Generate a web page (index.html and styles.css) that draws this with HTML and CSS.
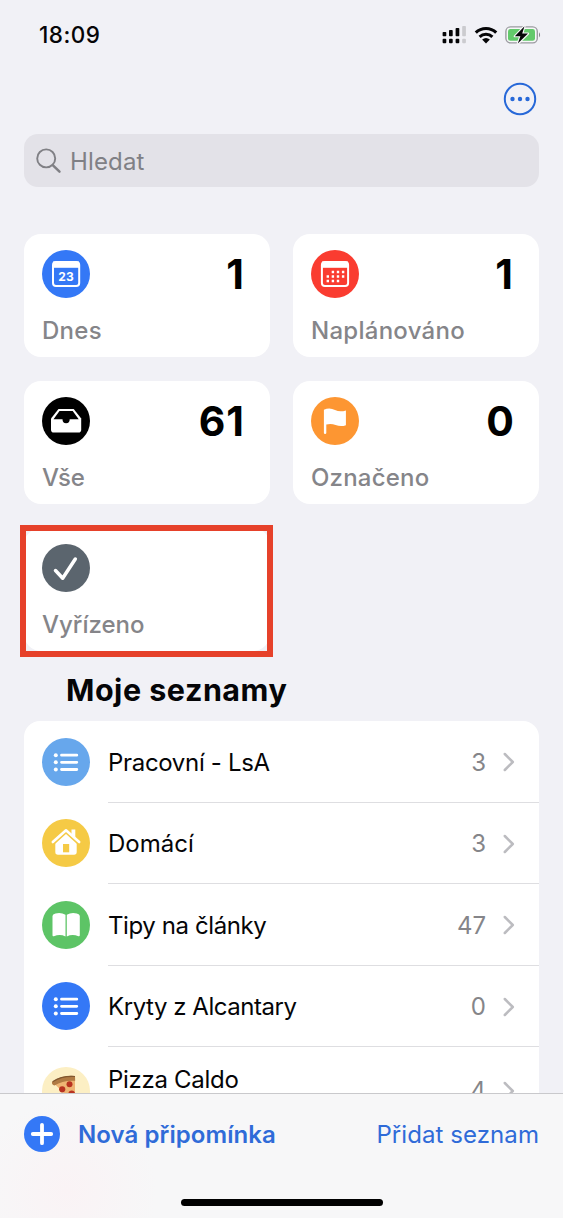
FILE: index.html
```html
<!DOCTYPE html>
<html lang="cs">
<head>
<meta charset="utf-8">
<title>Připomínky</title>
<link rel="stylesheet" href="styles.css">
</head>
<body>
<div class="phone">
  <header class="status">
    <span class="time">18:09</span>
    <div class="status-icons">
      <svg class="signal" width="25" height="18" viewBox="0 0 25 18">
        <g fill="#050507"><rect x="0.6" y="6" width="3.7" height="4.2" rx="0.8"/><rect x="7" y="4" width="3.7" height="6.2" rx="0.8"/><rect x="13.6" y="2" width="3.7" height="8.2" rx="0.8"/><rect x="0.6" y="12.7" width="3.7" height="4.6" rx="1"/><rect x="7" y="12.7" width="3.7" height="4.6" rx="1"/><rect x="13.6" y="12.7" width="3.7" height="4.6" rx="1"/></g>
        <g fill="#cbcbcf"><rect x="20.2" y="0" width="3.7" height="10.2" rx="0.8"/><rect x="20.2" y="12.7" width="3.7" height="4.6" rx="1"/></g>
      </svg>
      <svg class="wifi" width="24" height="18" viewBox="0 0 24 18">
        <path d="M1.8 6.7A14.6 14.6 0 0 1 22.2 6.7" fill="none" stroke="#050507" stroke-width="3.1"/>
        <path d="M5.6 10.9A9.3 9.3 0 0 1 18.4 10.9" fill="none" stroke="#050507" stroke-width="3"/>
        <path d="M8.1 13.6Q12 10.4 15.9 13.6L12 17.5Z" fill="#050507"/>
      </svg>
      <svg class="battery" width="37" height="20" viewBox="0 0 37 20">
        <rect x="0.9" y="1.9" width="31.4" height="16" rx="4.6" fill="#f7f7f8" stroke="#9b9ba0" stroke-width="1.4"/>
        <rect x="3" y="4" width="27" height="11.8" rx="2.4" fill="#63c96b"/>
        <path d="M34 7.2q2.2 2.700 0 5.400z" fill="#88888d"/>
        <path d="M19.500 1.200L9.800 11.200h5.600l-2.600 7.400L23 8.600h-5.800z" fill="#050507" stroke="#f7f7f8" stroke-width="2.200" paint-order="stroke" stroke-linejoin="round"/>
      </svg>
    </div>
  </header>

  <nav class="nav">
    <svg width="34" height="34" viewBox="0 0 34 34">
      <circle cx="17" cy="17" r="15.200" fill="none" stroke="#2768d8" stroke-width="2"/>
      <g fill="#2768d8"><circle cx="9.500" cy="17" r="2.200"/><circle cx="17" cy="17" r="2.200"/><circle cx="24.500" cy="17" r="2.200"/></g>
    </svg>
  </nav>

  <div class="search">
    <svg width="26" height="26" viewBox="0 0 26 26" fill="none" stroke="#808085" stroke-linecap="round"><circle cx="10.200" cy="10.400" r="9" stroke-width="1.900"/><path d="M17 17.300l6.500 6.400" stroke-width="2.500"/></svg>
    <span class="search-text">Hledat</span>
  </div>

  <main>
    <section class="cards">
      <article class="card">
        <div class="card-top">
          <svg class="disc" viewBox="0 0 48 48"><circle cx="24" cy="24" r="24" fill="#3478f6"/><rect x="11" y="12" width="26.200" height="24" rx="3" fill="none" stroke="#fff" stroke-width="2"/><path d="M11 11.500h26v6.300H11z" fill="#fff"/><text class="day" x="24" y="30.900" text-anchor="middle">23</text></svg>
          <span class="count">1</span>
        </div>
        <div class="label l-dnes">Dnes</div>
      </article>
      <article class="card">
        <div class="card-top">
          <svg class="disc" viewBox="0 0 48 48"><circle cx="24" cy="24" r="24" fill="#fa3c30"/><rect x="10.900" y="12" width="26.200" height="24" rx="3" fill="none" stroke="#fff" stroke-width="2"/><path d="M11 11.500h26v6.300H11z" fill="#fff"/><g stroke="#fff" stroke-width="2.400" stroke-dasharray="2.400 2.700"><path d="M20.700 22h12.600M15.600 26.500h17.700M15.600 31h12.600"/></g></svg>
          <span class="count">1</span>
        </div>
        <div class="label l-plan">Naplánováno</div>
      </article>
      <article class="card">
        <div class="card-top">
          <svg class="disc" viewBox="0 0 48 48"><circle cx="24" cy="24" r="24" fill="#000"/><path d="M16.500 12h15.200l7.500 9.500v11.200q0 2.800-2.800 2.800H11.800q-2.800 0-2.800-2.800V21.500z" fill="#fff"/><path d="M17.500 14h13.200l6 8.300h-9q0 3.900-3.600 3.900t-3.600-3.900h-9z" fill="#000"/></svg>
          <span class="count c-all">61</span>
        </div>
        <div class="label l-vse">Vše</div>
      </article>
      <article class="card">
        <div class="card-top">
          <svg class="disc" viewBox="0 0 48 48"><circle cx="24" cy="24" r="24" fill="#fd9632"/><path d="M12.900 12.800Q18.500 10 24 13q5 2.500 10.900.4V28.200q-5 1.800-10.300-.2-4.600-1.900-9.300-.5V36q0 1-1.200 1t-1.200-1z" fill="#fff"/></svg>
          <span class="count c-zero">0</span>
        </div>
        <div class="label l-ozn">Označeno</div>
      </article>
      <article class="card card-marked">
        <div class="card-top">
          <svg class="disc" viewBox="0 0 48 48"><circle cx="24" cy="24" r="24" fill="#5b656e"/><path d="M13.500 26.500l7.200 7.700L33.300 15" fill="none" stroke="#fff" stroke-width="3.500" stroke-linecap="round" stroke-linejoin="round"/></svg>
        </div>
        <div class="label l-vyr">Vyřízeno</div>
      </article>
    </section>

    <h2 class="heading">Moje seznamy</h2>

    <section class="list">
      <div class="row">
        <svg class="disc" viewBox="0 0 48 48"><circle cx="24" cy="24" r="24" fill="#67a7ec"/><g fill="#fff"><circle cx="13.800" cy="17.200" r="2"/><circle cx="13.800" cy="24.300" r="2"/><circle cx="13.800" cy="31.500" r="2"/></g><path d="M19.500 17.200h15.300M19.500 24.300h15.300M19.500 31.500h15.300" stroke="#fff" stroke-width="2.800" stroke-linecap="round"/></svg>
        <div class="row-body"><span class="name n1">Pracovní - LsA</span><span class="num">3</span><svg class="chev" viewBox="0 0 12 20"><path d="M1.800 2l8 8-8 8"/></svg></div>
      </div>
      <div class="row">
        <svg class="disc" viewBox="0 0 48 48"><circle cx="24" cy="24" r="24" fill="#f5ca45"/><path d="M13.300 23.500L24 14.500l10.700 9V33q0 2.700-2.700 2.700H16q-2.700 0-2.700-2.700z" fill="#fff"/><path d="M10 24L24 11.300 38 24" fill="none" stroke="#f5ca45" stroke-width="5.500"/><path d="M29.500 10.500h3.800v9.500l-3.800-3.500z" fill="#fff"/><path d="M10.800 23L24 11.300 37.200 23" fill="none" stroke="#fff" stroke-width="2.600" stroke-linecap="round" stroke-linejoin="round"/><path d="M21 25h6.200v8.300H21z" fill="#f5ca45"/></svg>
        <div class="row-body"><span class="name n2">Domácí</span><span class="num">3</span><svg class="chev" viewBox="0 0 12 20"><path d="M1.800 2l8 8-8 8"/></svg></div>
      </div>
      <div class="row">
        <svg class="disc" viewBox="0 0 48 48"><circle cx="24" cy="24" r="24" fill="#5dc466"/><path d="M10.500 15q0-1.600 3-2.500 5.500-1.400 10 1.300V35.500q-5.500-2.700-11.600-.3-1.400.5-1.400-1zM24.800 13.800q4.500-2.700 10-1.300 3 .9 3 2.500V34.200q0 1.500-1.400 1-6.100-2.400-11.600.3z" fill="#fff"/></svg>
        <div class="row-body"><span class="name n3">Tipy na články</span><span class="num">47</span><svg class="chev" viewBox="0 0 12 20"><path d="M1.800 2l8 8-8 8"/></svg></div>
      </div>
      <div class="row">
        <svg class="disc" viewBox="0 0 48 48"><circle cx="24" cy="24" r="24" fill="#3478f6"/><g fill="#fff"><circle cx="13.800" cy="17.200" r="2"/><circle cx="13.800" cy="24.300" r="2"/><circle cx="13.800" cy="31.500" r="2"/></g><path d="M19.500 17.200h15.300M19.500 24.300h15.300M19.500 31.500h15.300" stroke="#fff" stroke-width="2.800" stroke-linecap="round"/></svg>
        <div class="row-body"><span class="name n4">Kryty z Alcantary</span><span class="num">0</span><svg class="chev" viewBox="0 0 12 20"><path d="M1.800 2l8 8-8 8"/></svg></div>
      </div>
      <div class="row row-last">
        <svg class="disc" viewBox="0 0 48 48"><circle cx="24" cy="24" r="24" fill="#fcefc4"/><path d="M12.500 15.500Q22 9.500 33 9.800V36Q23 27 12.500 17z" fill="#eeb473"/><path d="M10 15Q20 7.500 33 9l.2 4.800Q21 13 12.500 18.500 9.500 17.500 10 15z" fill="#b07a43"/><path d="M10.600 14.700Q20 8.600 33 9.500" fill="none" stroke="#81572f" stroke-width="1.200"/><g fill="#b83220"><circle cx="27.500" cy="17.200" r="3"/><circle cx="20.200" cy="22.300" r="3.100"/><circle cx="29.700" cy="26.800" r="3.300"/></g></svg>
        <div class="row-body"><span class="name n5">Pizza Caldo</span><span class="num">4</span><svg class="chev" viewBox="0 0 12 20"><path d="M1.800 2l8 8-8 8"/></svg></div>
      </div>
    </section>
  </main>

  <footer class="toolbar">
    <div class="actions">
      <svg width="36" height="36" viewBox="0 0 36 36"><circle cx="18" cy="18" r="18" fill="#3478f6"/><path d="M18 8.800v18.400M8.800 18h18.400" stroke="#fff" stroke-width="3.800" stroke-linecap="round"/></svg>
      <span class="new">Nová připomínka</span>
      <span class="add">Přidat seznam</span>
    </div>
    <div class="home"></div>
  </footer>
</div>
</body>
</html>
```
FILE: styles.css
```css
*, *::after { box-sizing: border-box; }
body { margin: 0; background: #f1f1f6; font-family: Inter, "Liberation Sans", sans-serif; color: #050507; }
svg { display: block; flex: none; }
span, .label, .heading { white-space: nowrap; }

.phone { width: 563px; height: 1218px; display: flex; flex-direction: column; overflow: hidden; }

.status { height: 69px; flex: none; display: flex; justify-content: space-between; align-items: center; padding: 0 21px 0 39px; }
.time { font-size: 22.500px; font-weight: 500; letter-spacing: 0.500px; }
.status-icons { display: flex; align-items: center; gap: 7px; }

.nav { height: 65px; flex: none; display: flex; justify-content: flex-end; align-items: flex-start; padding: 13px 26px 0 0; }

.search { height: 53px; flex: none; margin: 0 24px; padding: 1px 0 0 12px; border-radius: 14px; background: #e3e2e8; display: flex; align-items: center; gap: 8px; }
.search-text { font-size: 24px; letter-spacing: 0.150px; color: #808085; }

main { flex: 1; min-height: 0; overflow: hidden; padding: 47px 24px 0; }
.cards { display: grid; grid-template-columns: 246px 246px; column-gap: 23px; row-gap: 24px; grid-auto-rows: 123px; }
.card { background: #fff; border-radius: 17px; padding: 16px 26px 0 18px; }
.card-marked { position: relative; }
.card-marked::after { content: ""; position: absolute; left: -4px; top: -3px; width: 253px; height: 132px; border: 6px solid #e6412a; }
.card-top { height: 48px; display: flex; align-items: center; justify-content: space-between; }
.disc { width: 48px; height: 48px; }
.day { font: 700 12px Inter, sans-serif; fill: #fff; }
.count { font-size: 41px; line-height: 48px; font-weight: 700; color: #000; }
.c-all { letter-spacing: 1px; margin-right: -1px; }
.c-zero { margin-right: -1px; }
.label { margin-top: 18px; font-size: 24px; line-height: 30px; font-weight: 500; color: #858589; }
.l-dnes { letter-spacing: 0.300px; }
.l-plan { letter-spacing: 0.270px; }
.l-ozn { letter-spacing: 0.200px; }

.heading { margin: 23px 0 0 42px; font-size: 30.500px; line-height: 32px; font-weight: 700; letter-spacing: 0.500px; }

.list { margin-top: 15px; background: #fff; border-radius: 16px 16px 0 0; }
.row { height: 81.500px; display: flex; align-items: center; padding-left: 18px; }
.row-body { flex: 1; align-self: stretch; margin-left: 18px; padding: 2px 24px 0 0; border-bottom: 1px solid #dedee1; display: flex; align-items: center; }
.name { flex: 1; font-size: 24px; }
.n1 { letter-spacing: -0.320px; }
.n3 { letter-spacing: -0.400px; }
.n4 { letter-spacing: -0.450px; }
.n5 { letter-spacing: -0.300px; }
.num { font-size: 24px; color: #858589; margin-right: 17px; }
.chev { width: 12px; height: 20px; fill: none; stroke: #bcbcc0; stroke-width: 2.500; stroke-linecap: round; stroke-linejoin: round; }
.row-last { height: 88px; }
.row-last .row-body { padding-top: 0; }
.row-last .name { align-self: flex-start; line-height: 30px; padding-top: 18px; }

.toolbar { height: 125px; flex: none; border-top: 1px solid #c9c9cc; background: radial-gradient(circle at 67px 96px, #faf3f5 0, #f7f7f8 90px); display: flex; flex-direction: column; justify-content: space-between; align-items: center; padding: 22px 24px 12px; }
.actions { width: 100%; display: flex; align-items: center; color: #2f6bd8; font-size: 24px; }
.new { font-weight: 600; margin-left: 18px; letter-spacing: 0.080px; }
.add { margin-left: auto; letter-spacing: 0.080px; }
.home { width: 202px; height: 7px; border-radius: 4px; background: #000; }
```
